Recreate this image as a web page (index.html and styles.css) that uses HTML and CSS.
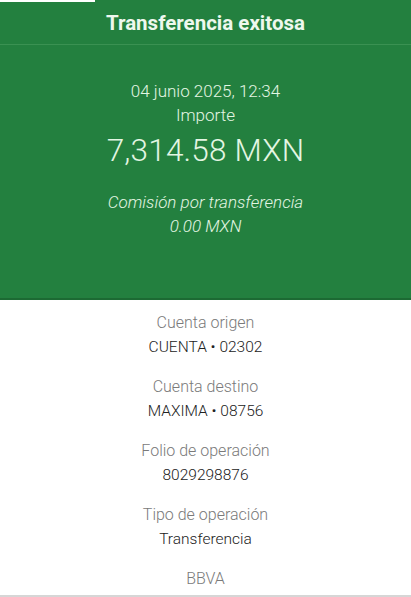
FILE: index.html
```html
<!DOCTYPE html>
<html lang="es">
<head>
<meta charset="utf-8">
<link rel="stylesheet" href="styles.css">
</head>
<body>
<div class="screen">
  <div class="topmark"></div>
  <section class="hero">
    <header class="title-bar">Transferencia exitosa</header>
    <div class="hero-body">
      <div class="date">04 junio 2025, 12:34</div>
      <div class="label">Importe</div>
      <div class="amount">7,314.58 MXN</div>
      <div class="fee">
        <div>Comisión por transferencia</div>
        <div>0.00 MXN</div>
      </div>
    </div>
  </section>
  <section class="details">
    <div class="item"><div class="k">Cuenta origen</div><div class="v">CUENTA • 02302</div></div>
    <div class="item"><div class="k">Cuenta destino</div><div class="v">MAXIMA • 08756</div></div>
    <div class="item"><div class="k">Folio de operación</div><div class="v">8029298876</div></div>
    <div class="item"><div class="k">Tipo de operación</div><div class="v">Transferencia</div></div>
    <div class="item"><div class="k">BBVA</div></div>
  </section>
</div>
</body>
</html>
```
FILE: styles.css
```css
* { box-sizing: border-box; }
html, body { margin: 0; padding: 0; background: #fff; }
body { font-family: Roboto, "Noto Sans", sans-serif; }
.screen {
  position: relative;
  width: 411px;
  height: 597px;
  overflow: hidden;
  display: flex;
  flex-direction: column;
  border-bottom: 2px solid #d6d6d6;
}
.topmark {
  position: absolute;
  left: 0; top: 0;
  width: 95px; height: 2px;
  background: #fff;
}
.hero {
  background: #23803f;
  height: 300px;
  border-bottom: 2px solid #1c6a33;
  color: #e3f6e3;
  text-align: center;
}
.title-bar {
  height: 45px;
  border-bottom: 1px solid #3a9152;
  font-weight: 700;
  font-size: 20.5px;
  line-height: 46px;
  color: #eef8ee;
}
.hero-body {
  padding-top: 33px;
  display: flex;
  flex-direction: column;
  align-items: center;
}
.date, .label { font-size: 17px; line-height: 24px; font-weight: 300; }
.date { margin-top: 1px; }
.amount { font-size: 31.5px; font-weight: 300; line-height: 42px; margin-top: 3px; letter-spacing: 0.2px; }
.fee { margin-top: 18px; font-style: italic; font-weight: 300; font-size: 17px; line-height: 24px; }
.details {
  padding-top: 11px;
  display: flex;
  flex-direction: column;
  align-items: center;
  gap: 16px;
}
.item { text-align: center; }
.k { color: #7a7a7a; font-size: 16px; line-height: 24px; font-weight: 300; }
.v { color: #222; font-size: 15.5px; line-height: 24px; font-weight: 300; }
```
